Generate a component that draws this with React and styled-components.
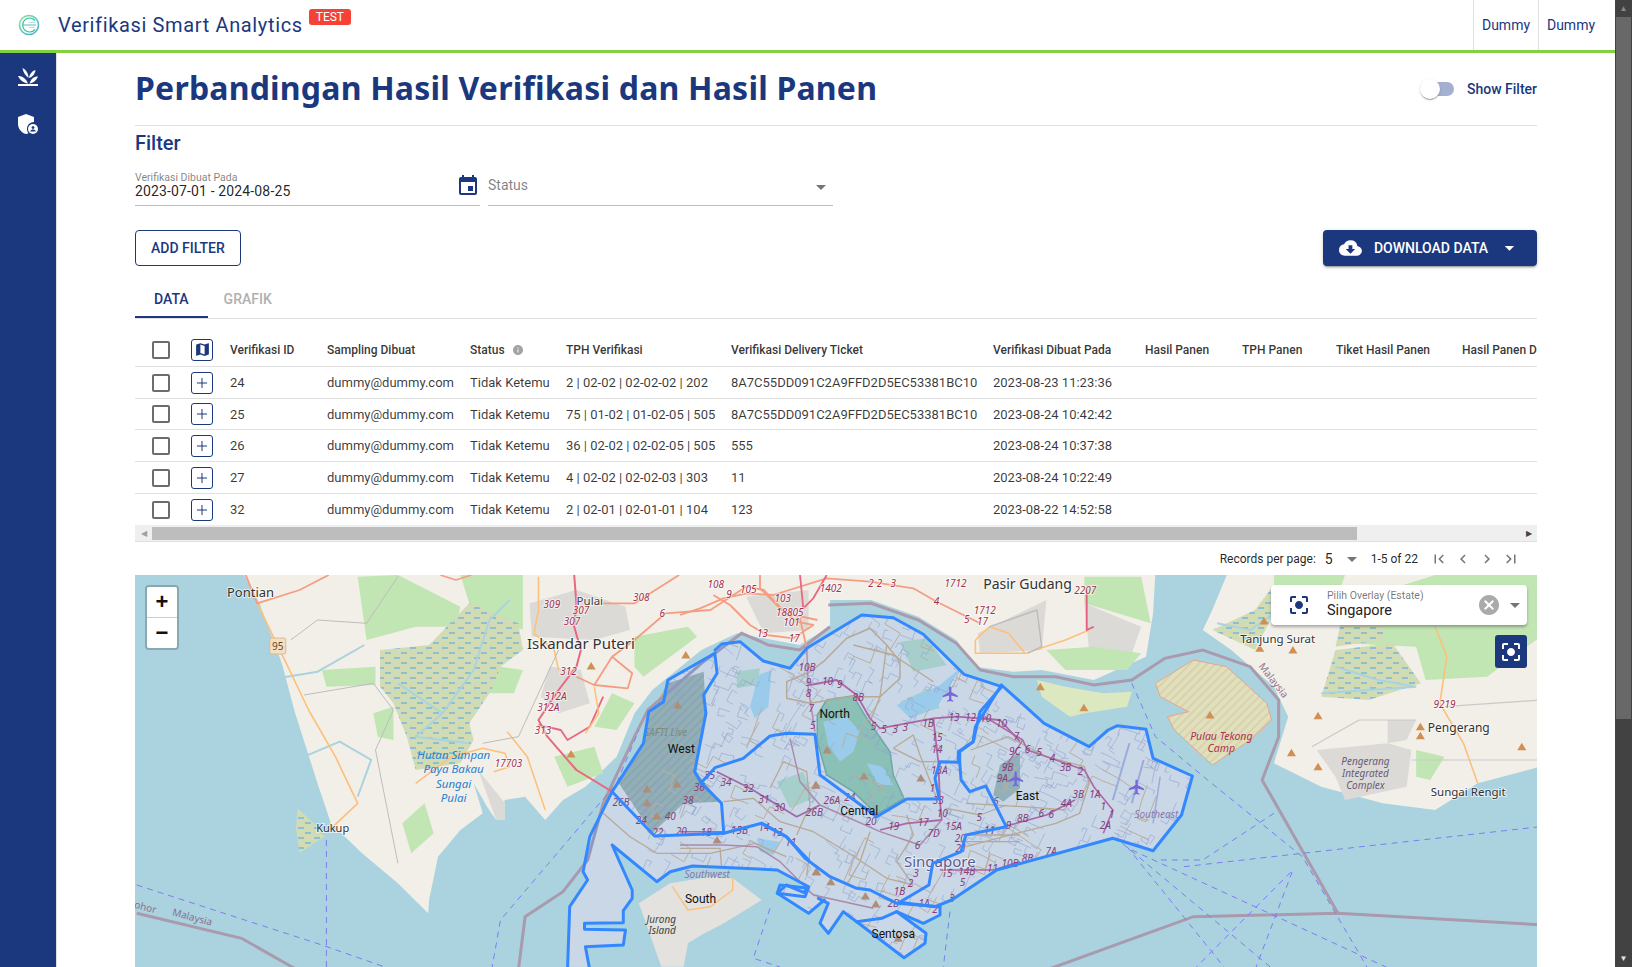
import styled, { createGlobalStyle } from "styled-components";
import {
  MdArrowDropDown,
  MdCancel,
  MdCenterFocusStrong,
  MdChevronLeft,
  MdChevronRight,
  MdCloudDownload,
  MdEvent,
  MdFirstPage,
  MdInfo,
  MdLastPage,
  MdLocalAirport,
  MdMap,
} from "react-icons/md";
import { Plus } from "lucide-react";

const navy = "#1b387f";

const GlobalStyle = createGlobalStyle`
  html, body {
    margin: 0;
    height: 100%;
    overflow: hidden;
    background: #fff;
    font-family: Roboto, "Liberation Sans", sans-serif;
    color: rgba(0, 0, 0, 0.87);
  }
`;

const Shell = styled.div`
  display: flex;
  height: 967px;
  overflow: hidden;
`;

const Viewport = styled.div`
  flex: 1;
  min-width: 0;
  display: flex;
  flex-direction: column;
`;

const TopBar = styled.header`
  flex: none;
  height: 50px;
  display: flex;
  align-items: center;
  border-bottom: 3px solid #82d140;
  background: #fff;
`;

const Brand = styled.div`
  flex: 1;
  height: 100%;
  display: flex;
  align-items: center;
  padding-left: 18px;
`;

const BrandTitle = styled.span`
  margin-left: 18px;
  font-size: 20px;
  letter-spacing: 0.64px;
  color: ${navy};
`;

const TestBadge = styled.span`
  align-self: flex-start;
  margin: 9px 0 0 6px;
  padding: 0 7px;
  height: 16px;
  line-height: 16px;
  font-size: 12px;
  color: #fff;
  background: #f44336;
  border-radius: 3px;
`;

const TopLink = styled.a`
  height: 100%;
  display: flex;
  align-items: center;
  padding: 0 8px;
  width: 48px;
  justify-content: center;
  font-size: 14px;
  color: ${navy};
  border-left: 1px solid #e0e0e0;
  &:last-child {
    margin-right: 12px;
  }
`;

const Body = styled.div`
  flex: 1;
  min-height: 0;
  display: flex;
`;

const SideNav = styled.nav`
  flex: none;
  width: 56px;
  border-right: 1px solid #e0e0e0;
  background: ${navy};
  display: flex;
  flex-direction: column;
  align-items: center;
  padding-top: 14px;
  gap: 26px;
  box-sizing: content-box;
`;

const Main = styled.main`
  flex: 1;
  min-width: 0;
  padding: 0 78px;
  overflow: hidden;
`;

const TitleRow = styled.div`
  height: 72px;
  display: flex;
  align-items: center;
  justify-content: space-between;
  border-bottom: 1px solid #e0e0e0;
`;

const PageTitle = styled.h1`
  margin: 0 0 3px;
  font-family: "Noto Sans", sans-serif;
  font-weight: 700;
  font-size: 32px;
  letter-spacing: 0.2px;
  color: ${navy};
`;

const ToggleWrap = styled.label`
  display: flex;
  align-items: center;
  gap: 13px;
  margin-bottom: 1px;
  font-size: 14px;
  font-weight: 500;
  color: ${navy};
`;

const ToggleTrack = styled.span`
  position: relative;
  width: 33px;
  height: 14px;
  border-radius: 7px;
  background: #a4b0cf;
`;

const ToggleKnob = styled.span`
  position: absolute;
  left: -1px;
  top: -3px;
  width: 20px;
  height: 20px;
  border-radius: 50%;
  background: #fff;
  box-shadow: 0 2px 1px -1px rgba(0, 0, 0, 0.2), 0 1px 1px rgba(0, 0, 0, 0.14), 0 1px 3px rgba(0, 0, 0, 0.12);
`;

const FilterHeading = styled.h2`
  margin: 1px 0 0;
  height: 32px;
  line-height: 32px;
  font-size: 20px;
  font-weight: 500;
  color: ${navy};
`;

const FieldRow = styled.div`
  display: flex;
  gap: 8px;
  margin-top: 10px;
`;

const Field = styled.div`
  position: relative;
  width: 345px;
  height: 37px;
  box-sizing: border-box;
  border-bottom: 1px solid #bdbdbd;
`;

const FieldLabel = styled.div`
  font-size: ${(p) => (p.$floating ? "10.5px" : "14px")};
  line-height: ${(p) => (p.$floating ? "12px" : "20px")};
  padding-top: ${(p) => (p.$floating ? "3px" : "6px")};
  color: rgba(0, 0, 0, 0.5);
`;

const FieldValue = styled.div`
  font-size: 14px;
  letter-spacing: 0.14px;
  line-height: 15px;
`;

const FieldIcon = styled.span`
  position: absolute;
  right: ${(p) => p.$right}px;
  top: ${(p) => p.$top}px;
  display: flex;
  color: ${(p) => p.$color};
`;

const ActionRow = styled.div`
  display: flex;
  justify-content: space-between;
  margin-top: 24px;
`;

const OutlineButton = styled.button`
  height: 36px;
  padding: 0 15px;
  background: #fff;
  border: 1px solid ${navy};
  border-radius: 4px;
  font: 500 14px Roboto, sans-serif;
  color: ${navy};
`;

const SolidButton = styled.button`
  width: 214px;
  height: 36px;
  padding: 0 16px;
  display: flex;
  align-items: center;
  background: ${navy};
  border: 0;
  border-radius: 4px;
  font: 500 14px Roboto, sans-serif;
  color: #fff;
  white-space: nowrap;
  box-shadow: 0 3px 1px -2px rgba(0, 0, 0, 0.2), 0 2px 2px rgba(0, 0, 0, 0.14), 0 1px 5px rgba(0, 0, 0, 0.12);
`;

const SolidLabel = styled.span`
  margin: 0 10px 0 12px;
`;

const Tabs = styled.div`
  display: flex;
  margin-top: 14px;
  height: 38px;
  box-sizing: content-box;
  border-bottom: 1px solid #e0e0e0;
`;

const Tab = styled.div`
  padding: 0 ${(p) => (p.$active ? 19 : 16)}px;
  line-height: 39px;
  font-size: 14px;
  font-weight: 500;
  color: ${(p) => (p.$active ? navy : "#b0b0b0")};
  border-bottom: 2px solid ${(p) => (p.$active ? navy : "transparent")};
`;

const TableScroll = styled.div`
  margin-top: 14px;
  overflow: hidden;
`;

const Table = styled.table`
  border-collapse: collapse;
  table-layout: fixed;
  width: 1465px;
`;

const HeadCell = styled.th`
  height: 33px;
  padding: 0 8px;
  text-align: left;
  font-size: 12px;
  font-weight: 500;
  white-space: nowrap;
  color: rgba(0, 0, 0, 0.8);
  border-bottom: 1px solid #e0e0e0;
`;

const Cell = styled.td`
  height: ${(p) => p.$height}px;
  padding: 0 8px;
  font-size: 13px;
  white-space: nowrap;
  color: rgba(0, 0, 0, 0.78);
  border-bottom: ${(p) => (p.$last ? "0" : "1px solid #e0e0e0")};
`;

const CheckBox = styled.span`
  display: block;
  margin-left: 9px;
  width: 18px;
  height: 18px;
  box-sizing: border-box;
  border: 2px solid #6d6d6d;
  border-radius: 2px;
`;

const RowButton = styled.span`
  display: flex;
  align-items: center;
  justify-content: center;
  width: 22px;
  height: 22px;
  box-sizing: border-box;
  border: 1px solid ${navy};
  border-radius: 3px;
  color: ${navy};
`;

const InfoIcon = styled.span`
  display: inline-flex;
  vertical-align: -2px;
  margin-left: 7px;
  color: #a3a3a3;
`;

const HScroll = styled.div`
  height: 16px;
  display: flex;
  align-items: center;
  background: #efefef;
  border-bottom: 1px solid #e0e0e0;
`;

const HArrow = styled.span`
  flex: none;
  width: 17px;
  text-align: center;
  font-size: 8px;
  color: ${(p) => (p.$dim ? "#a0a0a0" : "#444")};
`;

const HThumb = styled.div`
  width: 1205px;
  height: 13px;
  background: #bdbdbd;
`;

const HRest = styled.div`
  flex: 1;
`;

const Pager = styled.div`
  height: 33px;
  display: flex;
  align-items: center;
  justify-content: flex-end;
  padding-right: 17px;
  font-size: 12px;
`;

const PerPage = styled.span`
  margin-left: 9px;
  font-size: 14px;
`;

const PagerCaret = styled.span`
  display: flex;
  margin: 0 7px;
  color: #757575;
`;

const PagerIcons = styled.span`
  display: flex;
  gap: 6px;
  margin-left: 12px;
  color: #757575;
`;

const MapFrame = styled.div`
  position: relative;
  height: 392px;
  overflow: hidden;
  background: #aad3df;
`;

const MapSvg = styled.svg`
  display: block;
  width: 1402px;
  height: 392px;
`;

const ZoomBar = styled.div`
  position: absolute;
  left: 10px;
  top: 10px;
  width: 30px;
  border: 2px solid rgba(0, 0, 0, 0.2);
  border-radius: 4px;
  background-clip: padding-box;
`;

const ZoomBtn = styled.div`
  height: 30px;
  text-align: center;
  background: #fff;
  font: 700 22px/29px "Liberation Sans", sans-serif;
  color: #111;
  border-bottom: ${(p) => (p.$top ? "1px solid #ccc" : "0")};
  border-radius: ${(p) => (p.$top ? "2px 2px 0 0" : "0 0 2px 2px")};
`;

const OverlayPicker = styled.div`
  position: absolute;
  right: 10px;
  top: 10px;
  width: 256px;
  height: 40px;
  display: flex;
  align-items: center;
  background: #fff;
  border-radius: 4px;
  box-shadow: 0 2px 3px rgba(0, 0, 0, 0.3);
`;

const PickerIcon = styled.span`
  display: flex;
  margin-left: 16px;
  color: ${navy};
`;

const PickerText = styled.div`
  flex: 1;
  margin-left: 16px;
`;

const PickerLabel = styled.div`
  font-size: 10.5px;
  line-height: 12px;
  color: rgba(0, 0, 0, 0.55);
`;

const PickerValue = styled.div`
  font-size: 14.5px;
  line-height: 18px;
  color: #222;
`;

const PickerClear = styled.span`
  display: flex;
  color: #aaa;
  margin-right: 2px;
`;

const PickerCaret = styled.span`
  display: flex;
  color: #757575;
`;

const FocusButton = styled.div`
  position: absolute;
  right: 10px;
  top: 60px;
  width: 32px;
  height: 33px;
  display: flex;
  align-items: center;
  justify-content: center;
  background: ${navy};
  border-radius: 3px;
  color: #fff;
`;

const PageScrollbar = styled.div`
  flex: none;
  width: 17px;
  background: #424242;
  display: flex;
  flex-direction: column;
  align-items: center;
`;

const ScrollArrow = styled.span`
  flex: none;
  height: 17px;
  line-height: 17px;
  font-size: 8px;
  color: ${(p) => (p.$bright ? "#e8e8e8" : "#8a8a8a")};
`;

const ScrollThumb = styled.div`
  flex: none;
  width: 15px;
  height: 702px;
  background: #686868;
`;

const ScrollRest = styled.div`
  flex: 1;
`;

const MapLabel = styled.text`
  font-family: ${(p) => (p.$overlay ? "Roboto, sans-serif" : '"Noto Sans", sans-serif')};
  text-anchor: middle;
  dominant-baseline: central;
  font-size: ${(p) => p.$size}px;
  font-style: ${(p) => (p.$italic ? "italic" : "normal")};
  fill: ${(p) => p.$fill};
  paint-order: stroke;
  stroke: ${(p) => p.$halo || "none"};
  stroke-width: ${(p) => (p.$halo ? 2 : 0)}px;
  stroke-opacity: 0.6;
`;

// the zoom crops read at different scales, so each list of map points says which one it came from
const west = ([x, y]) => [130 + x / 2.24, 570 + y / 3];
const east = ([x, y]) => [800 + x / 2.11, 570 + y / 3];
const mid = ([x, y]) => [680 + x / 3, 575 + y / 3];
const line = (from, pts) => pts.map((p) => from(p).map((n) => n.toFixed(1)).join(",")).join(" ");

const landWest = [[250, 0], [290, 100], [340, 280], [370, 430], [420, 640], [450, 760], [520, 850], [600, 940], [668, 1030], [670, 990], [690, 860], [740, 780], [790, 730], [770, 640], [800, 710], [820, 750], [840, 690], [885, 680], [930, 750], [970, 690], [1020, 650], [1090, 560], [1130, 430], [1170, 360], [1280, 240], [1360, 190], [1420, 205], [1500, 225], [1568, 170], [1568, 0]];
const landNorth = [[0, 110], [60, 90], [150, 90], [250, 140], [330, 210], [370, 290], [450, 305], [510, 300], [620, 330], [730, 260], [745, 130], [750, 0], [0, 0]];
const landEast = [[905, 0], [870, 120], [850, 180], [910, 240], [1000, 350], [1030, 440], [1000, 580], [1100, 650], [1230, 700], [1340, 720], [1430, 640], [1562, 590], [1562, 0]];
const ubin = [[500, 330], [560, 350], [640, 370], [700, 365], [690, 410], [600, 430], [570, 440], [510, 380]];
const tekong = [[750, 340], [830, 270], [900, 290], [985, 400], [995, 450], [950, 510], [870, 585], [790, 480], [775, 440], [820, 425], [760, 380]];
const jurong = [[1140, 1000], [1210, 940], [1300, 920], [1350, 925], [1415, 990], [1330, 1060], [1280, 1095], [1250, 1120], [1240, 1190], [1190, 1190]];

const singaporePts = [
  ...[[1310, 250], [1205, 330], [1195, 395], [1162, 425], [1150, 520], [1080, 665], [1030, 800], [1015, 905], [1025, 930], [985, 1010], [980, 1190], [1030, 1190], [1020, 1130], [1105, 1125], [1110, 1080], [1018, 1078], [1018, 1060], [1105, 1058], [1105, 1022], [1125, 985], [1125, 960], [1080, 825], [1180, 935], [1210, 905], [1260, 888], [1450, 900], [1520, 950], [1510, 968], [1470, 945], [1450, 970], [1520, 1030], [1555, 990]].map(west),
  ...[[415, 970], [445, 985], [420, 1045], [445, 1075], [490, 1010], [530, 1040], [672, 1148], [735, 1105], [738, 1075], [650, 1010], [730, 1045], [780, 1020], [780, 995], [940, 890]].map(mid),
  ...[[415, 900], [660, 805], [745, 842], [805, 735], [828, 618], [745, 565], [730, 478], [670, 467], [650, 480], [610, 530], [515, 460], [425, 345]].map(east),
  ...[[852, 298], [730, 178], [640, 128], [545, 120], [380, 220], [330, 280], [250, 258], [180, 200], [125, 207], [105, 225]].map(mid),
];
const singapore = singaporePts.map((p) => p.map((n) => n.toFixed(1)).join(",")).join(" ");

const outlines = [
  [west, [[1310, 250], [1205, 330], [1195, 395], [1162, 425], [1150, 520], [1080, 665], [1030, 800], [1015, 905], [1025, 930], [985, 1010], [980, 1200]]],
  [west, [[1030, 1200], [1020, 1130], [1105, 1125], [1110, 1080], [1018, 1078], [1018, 1060], [1105, 1058], [1105, 1022], [1125, 985], [1125, 960], [1080, 825], [1180, 935], [1210, 905], [1260, 888], [1450, 900], [1520, 950], [1510, 968], [1470, 945], [1450, 970], [1520, 1030], [1555, 990]]],
  [mid, [[300, 930], [385, 940], [375, 965], [292, 955], [300, 930]]],
  [mid, [[415, 970], [445, 985], [420, 1045], [445, 1075], [490, 1010], [530, 1040], [605, 1030], [650, 1010], [730, 1045], [780, 1020], [780, 995]]],
  [mid, [[530, 1040], [672, 1148], [735, 1105], [738, 1075], [650, 1010]]],
  [west, [[1080, 665], [1175, 798], [1330, 790], [1415, 760], [1470, 800], [1520, 870]]],
  [west, [[1310, 250], [1315, 310], [1285, 375], [1290, 430], [1265, 605], [1280, 640], [1325, 700], [1330, 790]]],
  [mid, [[62, 625], [105, 578], [190, 550], [270, 483], [320, 475], [405, 478], [420, 600], [590, 725], [680, 672], [778, 672], [765, 610], [780, 560], [835, 562], [835, 530], [880, 500], [900, 410], [965, 335]]],
  [mid, [[105, 225], [125, 207], [180, 200], [250, 258], [330, 280], [380, 220], [545, 120], [640, 128], [730, 178], [852, 298], [965, 335]]],
  [east, [[425, 345], [515, 460], [610, 530], [650, 480], [670, 467], [730, 478], [745, 565], [828, 618], [805, 735], [745, 842], [660, 805], [415, 900], [320, 990], [285, 1010], [210, 997]]],
  [mid, [[245, 745], [320, 785], [375, 850], [450, 905], [530, 940], [570, 945], [650, 985], [780, 995]]],
  [east, [[337, 577], [337, 545], [365, 515], [370, 470], [425, 345]]],
  [east, [[337, 577], [340, 630], [358, 665], [392, 648], [435, 770], [350, 795], [340, 845], [280, 880], [272, 945], [210, 997]]],
];

const roads = [
  ["#fcc07a", 1.6, west, [[285, 100], [350, 280], [400, 420], [460, 560], [510, 700], [455, 770]]],
  ["#f59d80", 1.8, west, [[255, 0], [285, 100], [380, 60], [445, 15]]],
  ["#f59d80", 1.6, west, [[695, 15], [730, 30], [765, 15]]],
  ["#fcc07a", 1.5, west, [[915, 20], [915, 120], [905, 190], [950, 240], [960, 300]]],
  ["#e8687f", 2, west, [[995, 15], [1000, 100], [995, 170], [1010, 240], [1000, 290], [960, 360], [915, 450], [935, 500], [1000, 600], [1080, 665]]],
  ["#e8687f", 1.8, west, [[915, 465], [965, 480], [980, 510], [1030, 470], [1060, 380]]],
  ["#f59d80", 1.8, west, [[1000, 320], [1040, 345], [1115, 355], [1125, 310], [1080, 260], [1040, 345]]],
  ["#f59d80", 1.8, west, [[1080, 260], [1130, 210], [1200, 130], [1300, 120], [1380, 50], [1420, 60], [1470, 130], [1540, 150]]],
  ["#f59d80", 1.8, west, [[1060, 100], [1130, 100], [1230, 15]]],
  ["#fcc07a", 1.5, west, [[1040, 350], [1050, 430], [1020, 490]]],
  ["#fcc07a", 1.5, west, [[845, 485], [890, 560], [930, 720]]],
  ["#fcc07a", 1.5, west, [[640, 640], [720, 560], [790, 535], [840, 550], [850, 590], [815, 605]]],
  ["#bdbdbd", 1, west, [[390, 375], [545, 340], [590, 420], [550, 540], [600, 880]]],
  ["#bdbdbd", 1, west, [[360, 210], [420, 150], [530, 160], [600, 20]]],
  ["#bdbdbd", 1, west, [[790, 520], [870, 500], [960, 240]]],
  ["#f59d80", 1.8, mid, [[0, 120], [60, 100], [130, 70], [200, 55], [280, 60], [440, 10], [570, 20], [700, 40], [770, 80], [900, 145]]],
  ["#f59d80", 1.8, mid, [[100, 60], [150, 90], [210, 150], [260, 180], [340, 190], [400, 150], [350, 140], [300, 100], [240, 40], [240, 0]]],
  ["#e8687f", 1.8, mid, [[440, 0], [400, 70], [370, 100], [360, 0]]],
  ["#f59d80", 1.8, mid, [[360, 130], [380, 220]]],
  ["#fcc07a", 1.6, east, [[370, 210], [400, 170], [440, 190], [475, 250], [370, 250], [370, 210]]],
  ["#fcc07a", 1.4, east, [[475, 250], [560, 210], [610, 180]]],
  ["#bbb", 1.4, east, [[400, 170], [500, 120], [510, 230], [480, 250]]],
  ["#fcc07a", 1.6, east, [[1340, 170], [1365, 260], [1350, 400], [1400, 520], [1430, 640]]],
  ["#c9c9c9", 1.2, east, [[1360, 410], [1562, 390]]],
  ["#c9c9c9", 1.2, east, [[1290, 570], [1562, 570]]],
  ["#e85c7c", 1.8, east, [[605, 60], [605, 180], [620, 170]]],
  ["#c9c9c9", 1.2, east, [[1080, 530], [1180, 450], [1300, 450]]],
  ["#fcc07a", 1.4, west, [[1215, 950], [1250, 1020], [1300, 1010], [1350, 960], [1350, 925]]],

  ["#d9b27c", 1.5, mid, [[430, 260], [500, 190], [570, 160], [620, 210], [660, 260], [660, 310], [600, 365], [510, 365], [390, 385], [320, 370], [320, 320], [390, 290], [430, 260]]],
  ["#d9b27c", 1.3, mid, [[520, 210], [640, 240], [760, 320]]],
  ["#d9b27c", 1.3, mid, [[620, 210], [600, 365], [570, 440]]],
  ["#d9b27c", 1.3, mid, [[640, 520], [720, 560], [770, 560]]],
  ["#d9b27c", 1.3, mid, [[640, 520], [700, 480], [720, 540], [770, 670]]],
  ["#d9b27c", 1.3, mid, [[130, 680], [220, 670], [300, 740], [400, 770], [500, 830], [620, 910], [700, 930]]],
  ["#d9b27c", 1.3, mid, [[570, 770], [540, 860], [500, 930]]],
  ["#d9b27c", 1.3, mid, [[390, 830], [380, 900]]],
  ["#d9b27c", 1.3, mid, [[270, 640], [310, 560], [380, 590], [390, 690], [350, 780]]],
  ["#d9b27c", 1.3, mid, [[680, 720], [700, 780], [650, 860], [700, 930]]],
  ["#d9b27c", 1.3, mid, [[800, 700], [900, 720], [980, 690]]],
  ["#d9b27c", 1.3, mid, [[860, 780], [1020, 780]]],
  ["#d9b27c", 1.3, mid, [[840, 800], [1020, 800]]],
  ["#d9b27c", 1.3, west, [[1060, 730], [1120, 800], [1180, 850], [1300, 850], [1400, 820], [1470, 860]]],
  ["#d88f9f", 1.5, mid, [[380, 220], [385, 340], [405, 470]]],
  ["#cc5f90", 1.8, mid, [[390, 330], [470, 315], [530, 360], [570, 430], [600, 460], [760, 430], [830, 425], [960, 435], [1020, 500]]],
  ["#cc5f90", 1.8, mid, [[760, 430], [775, 560], [780, 680], [785, 735], [680, 745], [600, 765]]],
  ["#b9668f", 1.8, mid, [[110, 590], [210, 640], [350, 725], [420, 690]]],
  ["#c98a96", 1.4, mid, [[330, 490], [360, 620], [420, 690], [600, 770], [720, 810], [785, 735]]],
  ["#c98a96", 1.4, mid, [[0, 810], [130, 810], [230, 815], [300, 860], [400, 960], [580, 1000]]],
  ["#cc5f90", 1.6, mid, [[0, 770], [130, 770]]],
  ["#cc5f90", 1.6, mid, [[780, 885], [940, 885], [1020, 860]]],
  ["#d9b27c", 1.3, mid, [[0, 820], [120, 820], [125, 880]]],
  ["#d9b27c", 1.3, east, [[360, 540], [440, 500], [520, 560], [600, 590], [610, 640], [590, 730], [540, 760], [430, 800], [350, 830]]],
  ["#d9b27c", 1.3, east, [[350, 700], [470, 710], [560, 720]]],
  ["#cc5f90", 1.6, east, [[390, 440], [470, 510], [480, 540], [600, 600], [620, 650], [660, 720], [640, 790]]],
  ["#cc5f90", 1.6, east, [[430, 770], [520, 735], [580, 690]]],
  ["#cc5f90", 1.4, east, [[470, 510], [430, 600]]],
  ["#b4b6cf", 2, east, [[695, 520], [660, 690]]],
  ["#b4b6cf", 2, east, [[725, 570], [700, 700]]],
  ["#b4b6cf", 1.5, east, [[760, 620], [745, 760]]],
];

const rivers = [
  [west, [[600, 340], [700, 430], [770, 300], [805, 150], [850, 90]]],
  [west, [[700, 430], [640, 500], [760, 520]]],
  [west, [[345, 322], [420, 305], [525, 225]]],
  [west, [[390, 560], [470, 515], [540, 570], [510, 680]]],
  [east, [[1130, 290], [1220, 330], [1300, 350], [1100, 370]]],
  [east, [[880, 160], [950, 180], [1000, 130]]],
  [mid, [[100, 390], [200, 400], [250, 300]]],
  [mid, [[190, 400], [220, 500]]],
];

const greens = [
  [west, [[510, 20], [600, 15], [740, 110], [730, 170], [640, 170], [530, 210]]],
  [west, [[740, 15], [880, 15], [880, 180], [760, 100]]],
  [west, [[430, 300], [550, 290], [550, 345], [440, 350]]],
  [west, [[545, 430], [590, 410], [590, 510], [555, 500]]],
  [west, [[1130, 200], [1250, 170], [1270, 200], [1150, 320], [1130, 290]]],
  [west, [[1080, 370], [1130, 400], [1090, 480], [1040, 470]]],
  [west, [[830, 290], [880, 300], [860, 370], [800, 370]]],
  [west, [[610, 760], [660, 700], [680, 790], [630, 850]]],
  [west, [[950, 560], [1040, 530], [1060, 610], [980, 650]]],
  [east, [[1000, 15], [1150, 15], [1130, 100], [1000, 130]]],
  [east, [[1150, 100], [1340, 15], [1562, 15], [1562, 200], [1450, 320], [1320, 330], [1300, 230], [1140, 220]]],
  [east, [[600, 20], [720, 20], [740, 160], [600, 100]]],
  [east, [[520, 240], [620, 230], [720, 250], [690, 300], [560, 300]]],
  [east, [[1300, 540], [1360, 560], [1330, 630], [1300, 620]]],
];

const urban = [
  [west, [[895, 100], [1000, 60], [1110, 110], [1120, 180], [1040, 210], [900, 200]]],
  [west, [[940, 290], [1010, 300], [1030, 400], [960, 430], [920, 380]]],
  [west, [[1380, 80], [1520, 60], [1520, 180], [1420, 190]]],
  [east, [[375, 190], [520, 90], [510, 240], [380, 250]]],
  [east, [[600, 100], [720, 170], [700, 250], [610, 240]]],
  [east, [[1090, 540], [1240, 520], [1290, 540], [1280, 650], [1150, 690], [1130, 620]]],
  [east, [[1240, 450], [1300, 450], [1280, 510], [1240, 520]]],
  [west, [[780, 600], [840, 700], [840, 750], [820, 750]]],
];

const wetlands = [
  [west, [[560, 240], [670, 225], [760, 100], [870, 160], [880, 240], [830, 290], [810, 360], [760, 460], [770, 510], [740, 580], [640, 600], [620, 500], [590, 400], [560, 350]]],
  [west, [[375, 715], [420, 770], [435, 800], [380, 848], [372, 780]]],
  [east, [[870, 180], [960, 120], [1000, 45], [1000, 130], [960, 240], [930, 220]]],
  [east, [[1130, 240], [1250, 220], [1310, 340], [1200, 390], [1100, 380]]],
  [east, [[1150, 100], [1240, 60], [1230, 210], [1130, 230]]],
];

const forest = [
  [mid, [[412, 420], [440, 375], [520, 362], [560, 430], [630, 530], [640, 600], [672, 670], [590, 718], [520, 650], [440, 600], [412, 500]], "#a2cfa6"],
  [mid, [[170, 290], [240, 280], [230, 330], [170, 340]], "#c4e2c0"],
  [mid, [[660, 200], [740, 190], [800, 270], [700, 290]], "#c4e2c0"],
  [mid, [[660, 380], [750, 340], [780, 400], [680, 420]], "#c4e2c0"],
  [mid, [[290, 620], [370, 590], [400, 670], [330, 700]], "#c4e2c0"],
  [mid, [[960, 570], [1020, 530], [1020, 640], [970, 680], [940, 660]], "#a8bca8"],
];

const waterBlobs = [
  [mid, [[430, 440], [500, 425], [540, 470], [520, 530], [480, 560], [445, 510]]],
  [mid, [[560, 565], [610, 575], [640, 630], [595, 630]]],
  [mid, [[230, 790], [300, 800], [280, 840], [240, 830]]],
  [mid, [[650, 390], [780, 330], [840, 280], [770, 400], [690, 430]]],
  [mid, [[235, 300], [275, 285], [265, 395], [225, 430], [210, 395]]],
];

const safti = [[1205, 340], [1285, 305], [1290, 430], [1268, 605], [1322, 695], [1240, 700], [1170, 790], [1095, 640], [1150, 520], [1165, 430]];

const borders = [
  [west, [[15, 1030], [250, 1105], [375, 1200]]],
  [west, [[870, 1200], [885, 1040], [970, 965], [1025, 870], [1060, 700], [1130, 500], [1160, 420], [1280, 280], [1370, 190], [1430, 225], [1500, 240], [1568, 170]]],
  [east, [[60, 105], [150, 100], [250, 150], [330, 220], [380, 300], [450, 320], [540, 320], [620, 345], [700, 330], [770, 265], [850, 240], [950, 290], [1010, 390], [1010, 500], [975, 630], [1135, 1030]]],
  [east, [[520, 1200], [830, 1040], [1135, 1030], [1570, 1065]]],
];

const shipping = [
  [west, [[15, 945], [430, 1125], [590, 1200]]],
  [west, [[440, 810], [440, 1200]]],
  [west, [[810, 1200], [830, 1050], [1090, 640], [1140, 480]]],
  [east, [[680, 820], [1000, 1200]]],
  [east, [[700, 340], [750, 500], [860, 630], [1060, 860], [1200, 1200]]],
  [east, [[690, 830], [900, 1200]]],
  [east, [[810, 890], [1060, 850], [1562, 770]]],
  [east, [[830, 1200], [1040, 900], [960, 1200]]],
  [east, [[1000, 730], [850, 870], [760, 870]]],
  [east, [[700, 840], [1250, 1200]]],
  [mid, [[270, 1000], [220, 1150], [300, 1176]]],
  [mid, [[810, 1010], [790, 1176]]],
];

const peaks = [
  ...[[1033, 288], [1245, 255], [988, 552], [1227, 405], [1225, 642], [1158, 657], [1158, 698], [1180, 738], [1315, 810], [1537, 645], [1537, 905]].map(west),
  ...[[507, 350], [599, 413], [865, 435], [979, 153], [970, 235], [1040, 240], [1093, 437], [1037, 548], [1093, 590], [1309, 470], [1309, 497], [1523, 530], [57, 540], [135, 618], [33, 645], [255, 624], [35, 905], [65, 935], [138, 978], [160, 1002], [207, 1105]].map(east),
];

const planes = [[317, 373], [455, 627], [710, 652]].map(east);

// thin street texture, clipped to the island, seeded so that every render is the same
const makeStreets = (count, step, turns, seed) => {
  let s = seed;
  const rand = () => {
    s = (s * 16807) % 2147483647;
    return s / 2147483647;
  };
  return Array.from({ length: count }, () => {
    let x = 640 + rand() * 560;
    let y = 610 + rand() * 350;
    let angle = 0.45 + Math.floor(rand() * 4) * (Math.PI / 2);
    const pts = [`M${x.toFixed(1)} ${y.toFixed(1)}`];
    for (let i = 0; i < turns; i++) {
      angle += (Math.floor(rand() * 3) - 1) * (Math.PI / 2) + (rand() - 0.5) * 0.25;
      const len = step * (0.6 + rand() * 0.8);
      x += Math.cos(angle) * len;
      y += Math.sin(angle) * len;
      pts.push(`L${x.toFixed(1)} ${y.toFixed(1)}`);
    }
    return pts.join("");
  }).join("");
};

const greyStreets = makeStreets(620, 6, 4, 4211);
const tanStreets = makeStreets(120, 14, 3, 9173);

const routeColor = "#a5304f";
const overlayRoute = "#86407a";

const placeLabels = [
  [west, 270, 65, "Pontian", 13, "#333"],
  [west, 1010, 220, "Iskandar Puteri", 15, "#333"],
  [west, 1030, 90, "Pulai", 11.5, "#444"],
  [west, 454, 772, "Kukup", 11, "#333"],
  [east, 480, 40, "Pasir Gudang", 14, "#333"],
  [east, 1008, 205, "Tanjung Surat", 11.5, "#333"],
  [east, 1390, 473, "Pengerang", 12, "#333"],
  [east, 1410, 665, "Sungai Rengit", 11.5, "#333"],
  [east, 295, 872, "Singapore", 15, "#5b5a8f"],
];

const overlayLabels = [
  [west, 1235, 537, "West"],
  [west, 1278, 987, "South"],
  [east, 73, 432, "North"],
  [east, 125, 722, "Central"],
  [east, 480, 678, "East"],
  [east, 197, 1092, "Sentosa"],
];

const italicLabels = [
  [west, 725, 553, "Hutan Simpan", 11.5, "#2a7fd0"],
  [west, 725, 596, "Paya Bakau", 11.5, "#2a7fd0"],
  [west, 725, 639, "Sungai", 11.5, "#2a7fd0"],
  [west, 725, 682, "Pulai", 11.5, "#2a7fd0"],
  [west, 1190, 1046, "Jurong", 10, "#444"],
  [west, 1192, 1080, "Island", 10, "#444"],
  [west, 1200, 487, "SAFTI Live", 10, "#7d8a80"],
  [west, 1293, 912, "Southwest", 10, "#8a78a8"],
  [east, 752, 733, "Southeast", 10, "#8a78a8"],
  [east, 889, 497, "Pulau Tekong", 10.5, "#b03050"],
  [east, 889, 533, "Camp", 10.5, "#b03050"],
  [east, 1193, 573, "Pengerang", 10, "#6a5a7a"],
  [east, 1193, 608, "Integrated", 10, "#6a5a7a"],
  [east, 1193, 645, "Complex", 10, "#6a5a7a"],
];

const routesOpen = [
  [west, [[945, 103, "309"], [1010, 120, "307"], [990, 152, "307"], [1145, 80, "308"], [1192, 130, "6"], [1312, 42, "108"], [1342, 72, "9"], [1385, 58, "105"], [1462, 85, "103"], [1478, 125, "18805"], [1482, 155, "101"], [1417, 188, "13"], [1488, 205, "17"], [982, 302, "312"], [953, 377, "312A"], [937, 412, "312A"], [925, 480, "313"], [848, 580, "17703"]]],
  [east, [[65, 55, "1402"], [150, 38, "2"], [168, 38, "2"], [197, 40, "3"], [328, 38, "1712"], [602, 60, "2207"], [288, 92, "4"], [390, 120, "1712"], [352, 147, "5"], [385, 152, "17"], [1360, 402, "9219"]]],
];

const routesOverlay = [
  [west, [[1100, 697, "26B"], [1335, 635, "34"], [1385, 655, "32"], [1420, 688, "31"], [1455, 710, "30"], [1533, 727, "26B"], [1250, 690, "38"], [1275, 652, "36"], [1298, 615, "35"], [1210, 737, "40"], [1145, 750, "24"], [1182, 785, "22"], [1235, 782, "20"], [1290, 785, "18"], [1365, 780, "15B"], [1420, 770, "14"], [1450, 785, "13"], [1480, 815, "11"]]],
  [east, [[15, 292, "10B"], [18, 337, "9"], [58, 332, "10"], [84, 342, "9"], [18, 370, "8"], [123, 381, "8B"], [24, 415, "7"], [27, 465, "5"], [155, 467, "5"], [177, 478, "5"], [201, 476, "3"], [222, 470, "3"], [270, 460, "1B"], [325, 442, "13"], [360, 440, "12"], [392, 445, "10"], [425, 458, "10"], [289, 500, "15"], [289, 537, "14"], [457, 498, "7"], [453, 543, "9C"], [480, 538, "6"], [505, 547, "5"], [533, 565, "4"], [560, 592, "3B"], [592, 603, "2"], [438, 590, "9B"], [427, 623, "9A"], [622, 672, "1A"], [587, 672, "3B"], [562, 700, "4A"], [509, 730, "6"], [530, 732, "6"], [470, 745, "8B"], [640, 708, "1"], [658, 733, "1"], [644, 765, "2A"], [294, 600, "13A"], [279, 655, "1"], [413, 692, "6"], [292, 690, "33"], [300, 730, "10"], [378, 742, "5"], [260, 755, "17"], [198, 768, "19"], [324, 768, "15A"], [282, 790, "7D"], [248, 825, "6"], [338, 803, "20"], [340, 833, "21"], [67, 690, "26A"], [105, 680, "24"], [150, 752, "20"], [310, 910, "15"], [352, 904, "14B"], [343, 935, "5"], [406, 895, "11"], [443, 880, "10B"], [480, 865, "8B"], [530, 843, "7A"], [245, 908, "3"], [233, 938, "2"], [210, 962, "1B"], [262, 998, "1A"], [285, 1016, "2"], [197, 998, "2B"], [320, 985, "3"], [400, 780, "11"], [440, 765, "9"]]],
];

const OsmMap = () => {
  const [pontX, pontY] = west([331, 228]);
  const [malayWX, malayWY] = west([140, 1040]);
  const [johorX, johorY] = west([35, 1010]);
  const [malayEX, malayEY] = east([1000, 330]);
  return (
    <MapSvg viewBox="135 575 1402 392">
      <defs>
        <pattern id="marsh" width="16" height="10" patternUnits="userSpaceOnUse">
          <rect width="16" height="10" fill="#d2dcb4" />
          <path d="M1 3h6M10 8h6" stroke="#4aa4ef" strokeWidth="1" />
        </pattern>
        <pattern id="hatch" width="6" height="6" patternUnits="userSpaceOnUse" patternTransform="rotate(-45)">
          <rect width="6" height="6" fill="#aab8a6" />
          <path d="M0 3h6" stroke="#98a795" strokeWidth="1" />
        </pattern>
        <pattern id="camp" width="6" height="6" patternUnits="userSpaceOnUse" patternTransform="rotate(-45)">
          <rect width="6" height="6" fill="#dfe0bc" />
          <path d="M0 3h6" stroke="#d8c3a0" strokeWidth="1" />
        </pattern>
        <clipPath id="island">
          <polygon points={singapore} />
        </clipPath>
        <filter id="soft">
          <feGaussianBlur stdDeviation="0.45" />
        </filter>
      </defs>

      <g filter="url(#soft)">
        <polygon points={line(west, landWest)} fill="#f2efe9" />
        <polygon points={line(east, landNorth)} fill="#f2efe9" />
        <polygon points={line(east, landEast)} fill="#f2efe9" />
        <polygon points={line(east, ubin)} fill="#dbe8c0" />
        <polygon points={line(east, tekong)} fill="url(#camp)" stroke="#e2a78d" strokeWidth="1" />
        <polygon points={line(west, jurong)} fill="#e4e2de" />
        {urban.map(([from, pts], i) => (
          <polygon key={i} points={line(from, pts)} fill="#dcdad6" />
        ))}
        {greens.map(([from, pts], i) => (
          <polygon key={i} points={line(from, pts)} fill="#c2e5b4" />
        ))}
        {wetlands.map(([from, pts], i) => (
          <polygon key={i} points={line(from, pts)} fill="url(#marsh)" />
        ))}
        {rivers.map(([from, pts], i) => (
          <polyline key={i} points={line(from, pts)} fill="none" stroke="#aad3df" strokeWidth="2" />
        ))}
        <polygon points={singapore} fill="#f0ebe2" />
        {forest.map(([from, pts, color], i) => (
          <polygon key={i} points={line(from, pts)} fill={color} stroke={i === 0 ? "#7fb08f" : "none"} strokeWidth="1.5" />
        ))}
        {waterBlobs.map(([from, pts], i) => (
          <polygon key={i} points={line(from, pts)} fill="#b6dde6" />
        ))}
        <polygon points={line(west, safti)} fill="url(#hatch)" />
        <g clipPath="url(#island)" fill="none">
          <path d={greyStreets} stroke="#a9a9c0" strokeWidth="0.6" />
          <path d={tanStreets} stroke="#dcb884" strokeWidth="1" />
        </g>
        {borders.map(([from, pts], i) => (
          <polyline key={i} points={line(from, pts)} fill="none" stroke="#a99aae" strokeWidth="3" />
        ))}
        {shipping.map(([from, pts], i) => (
          <polyline key={i} points={line(from, pts)} fill="none" stroke="#7d7cf0" strokeWidth="1" strokeDasharray="6 5" />
        ))}
        {roads.map(([color, width, from, pts], i) => (
          <polyline key={i} points={line(from, pts)} fill="none" stroke={color} strokeWidth={width} strokeLinejoin="round" />
        ))}
        {peaks.map(([x, y], i) => (
          <polygon key={i} points={`${x},${y - 4} ${x + 4.5},${y + 3.5} ${x - 4.5},${y + 3.5}`} fill="#d08f55" />
        ))}
      </g>

      <polygon points={singapore} fill="rgba(51, 136, 255, 0.2)" />
      {planes.map(([x, y], i) => (
        <MdLocalAirport key={i} x={x - 9} y={y - 9} size={18} color="#7468d8" />
      ))}

      <rect x={pontX - 8} y={pontY - 8} width="16" height="16" rx="2" fill="#f6dfc0" stroke="#dcb98a" />
      <MapLabel x={pontX} y={pontY} $size={10} $fill="#5f4a2a">95</MapLabel>

      {routesOpen.map(([from, items]) =>
        items.map(([x, y, text]) => {
          const [px, py] = from([x, y]);
          return (
            <MapLabel key={`${text}${x}`} x={px} y={py} $size={10} $italic $fill={routeColor} $halo="#fff">
              {text}
            </MapLabel>
          );
        })
      )}
      {routesOverlay.map(([from, items]) =>
        items.map(([x, y, text]) => {
          const [px, py] = from([x, y]);
          return (
            <MapLabel key={`${text}${x}`} x={px} y={py} $size={10} $italic $fill={overlayRoute}>
              {text}
            </MapLabel>
          );
        })
      )}
      {placeLabels.map(([from, x, y, text, size, fill]) => {
        const [px, py] = from([x, y]);
        return (
          <MapLabel key={text + x} x={px} y={py} $size={size} $fill={fill} $halo="#fff">
            {text}
          </MapLabel>
        );
      })}
      {italicLabels.map(([from, x, y, text, size, fill]) => {
        const [px, py] = from([x, y]);
        return (
          <MapLabel key={text + x} x={px} y={py} $size={size} $italic $fill={fill}>
            {text}
          </MapLabel>
        );
      })}
      <MapLabel x={johorX} y={johorY} $size={10} $fill="#8a6f90" transform={`rotate(15 ${johorX} ${johorY})`}>ohor</MapLabel>
      <MapLabel x={malayWX} y={malayWY} $size={10} $fill="#8a6f90" transform={`rotate(15 ${malayWX} ${malayWY})`}>Malaysia</MapLabel>
      <MapLabel x={malayEX} y={malayEY} $size={10} $fill="#8a6f90" transform={`rotate(52 ${malayEX} ${malayEY})`}>Malaysia</MapLabel>

      {outlines.map(([from, pts], i) => (
        <polyline key={i} points={line(from, pts)} fill="none" stroke="#3388ff" strokeWidth="3" strokeLinejoin="round" strokeLinecap="round" />
      ))}
      {overlayLabels.map(([from, x, y, text]) => {
        const [px, py] = from([x, y]);
        return (
          <MapLabel key={text} x={px} y={py} $size={12} $fill="#111" $overlay>
            {text}
          </MapLabel>
        );
      })}
    </MapSvg>
  );
};

const LogoMark = () => (
  <svg width="22" height="22" viewBox="0 0 22 22">
    <defs>
      <linearGradient id="ring" x1="0" y1="0" x2="1" y2="1">
        <stop offset="0" stopColor="#7ddc6a" />
        <stop offset="0.55" stopColor="#27b8a8" />
        <stop offset="1" stopColor="#2f8fc8" />
      </linearGradient>
    </defs>
    <circle cx="11" cy="11" r="9.500" fill="none" stroke="url(#ring)" strokeWidth="1.600" opacity="0.8" />
    <path d="M17 6.500A7 7 0 1 0 17 15.500" fill="none" stroke="#2fbf9f" strokeWidth="1.200" />
    <path d="M5 11h13" stroke="#59bcc0" strokeWidth="1" />
    <path d="M11 8.500h6M11 13.500h6" stroke="#b6dfe4" strokeWidth="1.200" />
  </svg>
);

const PlantIcon = () => (
  <svg width="22" height="20" viewBox="0 0 22 20" fill="#fff">
    <path d="M1 17h20v2H1z" />
    <path d="M5.500 1c3.500 1.500 6 5.500 6 10C8.500 8.500 6 5.500 5.500 1z" />
    <path d="M18.500 3c-3.500 1-6 4-6.500 8 3.500-1 6-4 6.500-8z" />
    <path d="M1 9c4.500 0 8 2.500 10 7.500-4-.5-8-3-10-7.500z" />
    <path d="M21 9.500c-4.500 0-7 2.500-8.500 7 3.500-.5 6.500-2.500 8.500-7z" />
  </svg>
);

const ShieldIcon = () => (
  <svg width="22" height="22" viewBox="0 0 22 22" fill="#fff">
    <path d="M9 1l8 3v5c-4 0-7 3-7 7 0 1.500.5 3 1.400 4.200-.8.400-1.600.7-2.400.800-4.500-1-8-5.500-8-10V4z" />
    <circle cx="16" cy="16" r="5" fill="#fff" />
    <circle cx="16" cy="14.600" r="1.400" fill={navy} />
    <path d="M13.200 18.500c.5-1.500 1.500-2 2.800-2s2.300.5 2.800 2z" fill={navy} />
  </svg>
);

const columns = [48, 39, 97, 143, 96, 165, 262, 152, 97, 94, 126, 146];

const headers = ["Verifikasi ID", "Sampling Dibuat", "Status", "TPH Verifikasi", "Verifikasi Delivery Ticket", "Verifikasi Dibuat Pada", "Hasil Panen", "TPH Panen", "Tiket Hasil Panen", "Hasil Panen D"];

const rows = [
  ["24", "2 | 02-02 | 02-02-02 | 202", "8A7C55DD091C2A9FFD2D5EC53381BC10", "2023-08-23 11:23:36"],
  ["25", "75 | 01-02 | 01-02-05 | 505", "8A7C55DD091C2A9FFD2D5EC53381BC10", "2023-08-24 10:42:42"],
  ["26", "36 | 02-02 | 02-02-05 | 505", "555", "2023-08-24 10:37:38"],
  ["27", "4 | 02-02 | 02-02-03 | 303", "11", "2023-08-24 10:22:49"],
  ["32", "2 | 02-01 | 02-01-01 | 104", "123", "2023-08-22 14:52:58"],
];

export default function App() {
  return (
    <>
      <GlobalStyle />
      <Shell>
        <Viewport>
          <TopBar>
            <Brand>
              <LogoMark />
              <BrandTitle>Verifikasi Smart Analytics</BrandTitle>
              <TestBadge>TEST</TestBadge>
            </Brand>
            <TopLink>Dummy</TopLink>
            <TopLink>Dummy</TopLink>
          </TopBar>
          <Body>
            <SideNav>
              <PlantIcon />
              <ShieldIcon />
            </SideNav>
            <Main>
              <TitleRow>
                <PageTitle>Perbandingan Hasil Verifikasi dan Hasil Panen</PageTitle>
                <ToggleWrap>
                  <ToggleTrack>
                    <ToggleKnob />
                  </ToggleTrack>
                  Show Filter
                </ToggleWrap>
              </TitleRow>
              <FilterHeading>Filter</FilterHeading>
              <FieldRow>
                <Field>
                  <FieldLabel $floating>Verifikasi Dibuat Pada</FieldLabel>
                  <FieldValue>2023-07-01 - 2024-08-25</FieldValue>
                  <FieldIcon $right={0} $top={5} $color={navy}>
                    <MdEvent size={24} />
                  </FieldIcon>
                </Field>
                <Field>
                  <FieldLabel>Status</FieldLabel>
                  <FieldIcon $right={0} $top={6} $color="#757575">
                    <MdArrowDropDown size={24} />
                  </FieldIcon>
                </Field>
              </FieldRow>
              <ActionRow>
                <OutlineButton>ADD FILTER</OutlineButton>
                <SolidButton>
                  <MdCloudDownload size={24} />
                  <SolidLabel>DOWNLOAD DATA</SolidLabel>
                  <MdArrowDropDown size={24} />
                </SolidButton>
              </ActionRow>
              <Tabs>
                <Tab $active>DATA</Tab>
                <Tab>GRAFIK</Tab>
              </Tabs>
              <TableScroll>
                <Table>
                  <colgroup>
                    {columns.map((w, i) => (
                      <col key={i} width={w} />
                    ))}
                  </colgroup>
                  <thead>
                    <tr>
                      <HeadCell>
                        <CheckBox />
                      </HeadCell>
                      <HeadCell>
                        <RowButton>
                          <MdMap size={17} />
                        </RowButton>
                      </HeadCell>
                      {headers.map((h) => (
                        <HeadCell key={h}>
                          {h}
                          {h === "Status" && (
                            <InfoIcon>
                              <MdInfo size={12} />
                            </InfoIcon>
                          )}
                        </HeadCell>
                      ))}
                    </tr>
                  </thead>
                  <tbody>
                    {rows.map((r, i) => {
                      const h = i === 1 ? 30 : 31;
                      const last = i === 4;
                      return (
                        <tr key={r[0]}>
                          <Cell $height={h} $last={last}>
                            <CheckBox />
                          </Cell>
                          <Cell $height={h} $last={last}>
                            <RowButton>
                              <Plus size={16} strokeWidth={1.5} />
                            </RowButton>
                          </Cell>
                          <Cell $height={h} $last={last}>{r[0]}</Cell>
                          <Cell $height={h} $last={last}>dummy@dummy.com</Cell>
                          <Cell $height={h} $last={last}>Tidak Ketemu</Cell>
                          <Cell $height={h} $last={last}>{r[1]}</Cell>
                          <Cell $height={h} $last={last}>{r[2]}</Cell>
                          <Cell $height={h} $last={last}>{r[3]}</Cell>
                          <Cell $height={h} $last={last} colSpan={4} />
                        </tr>
                      );
                    })}
                  </tbody>
                </Table>
              </TableScroll>
              <HScroll>
                <HArrow $dim>◀</HArrow>
                <HThumb />
                <HRest />
                <HArrow>▶</HArrow>
              </HScroll>
              <Pager>
                Records per page:
                <PerPage>5</PerPage>
                <PagerCaret>
                  <MdArrowDropDown size={24} />
                </PagerCaret>
                1-5 of 22
                <PagerIcons>
                  <MdFirstPage size={18} />
                  <MdChevronLeft size={18} />
                  <MdChevronRight size={18} />
                  <MdLastPage size={18} />
                </PagerIcons>
              </Pager>
              <MapFrame>
                <OsmMap />
                <ZoomBar>
                  <ZoomBtn $top>+</ZoomBtn>
                  <ZoomBtn>−</ZoomBtn>
                </ZoomBar>
                <OverlayPicker>
                  <PickerIcon>
                    <MdCenterFocusStrong size={24} />
                  </PickerIcon>
                  <PickerText>
                    <PickerLabel>Pilih Overlay (Estate)</PickerLabel>
                    <PickerValue>Singapore</PickerValue>
                  </PickerText>
                  <PickerClear>
                    <MdCancel size={24} />
                  </PickerClear>
                  <PickerCaret>
                    <MdArrowDropDown size={24} />
                  </PickerCaret>
                </OverlayPicker>
                <FocusButton>
                  <MdCenterFocusStrong size={24} />
                </FocusButton>
              </MapFrame>
            </Main>
          </Body>
        </Viewport>
        <PageScrollbar>
          <ScrollArrow>▲</ScrollArrow>
          <ScrollThumb />
          <ScrollRest />
          <ScrollArrow $bright>▼</ScrollArrow>
        </PageScrollbar>
      </Shell>
    </>
  );
}
